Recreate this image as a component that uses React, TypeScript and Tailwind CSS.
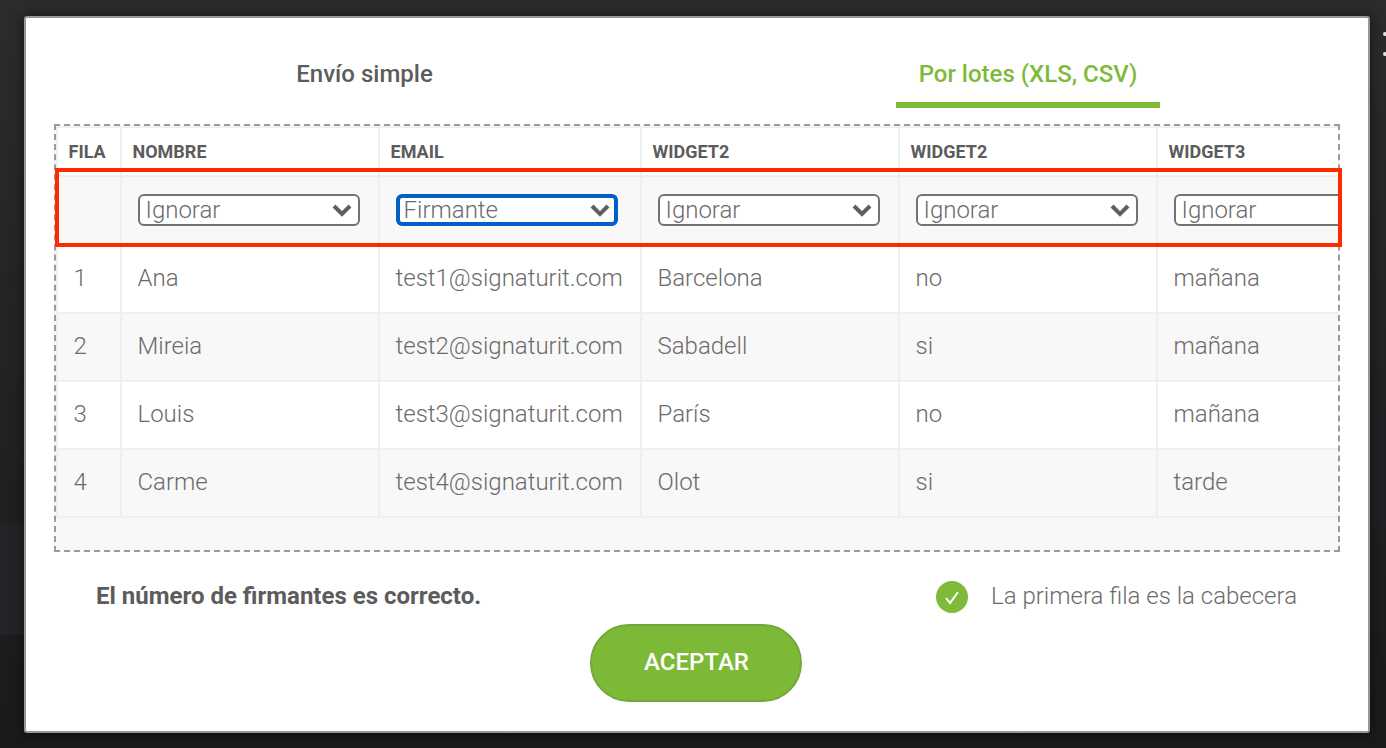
import React from "react";

const columns = ["FILA", "NOMBRE", "EMAIL", "WIDGET2", "WIDGET2", "WIDGET3"];
const selects = ["Ignorar", "Firmante", "Ignorar", "Ignorar", "Ignorar"];
const rows = [
  ["1", "Ana", "test1@signaturit.com", "Barcelona", "no", "mañana"],
  ["2", "Mireia", "test2@signaturit.com", "Sabadell", "si", "mañana"],
  ["3", "Louis", "test3@signaturit.com", "París", "no", "mañana"],
  ["4", "Carme", "test4@signaturit.com", "Olot", "si", "tarde"],
];
const gridCols = "grid grid-cols-[64px_258px_262px_258px_258px_260px] w-[1362px]";

function Chevron() {
  return (
    <svg width="22" height="14" viewBox="0 0 22 14" className="shrink-0">
      <path d="M3 3l8 8 8-8" fill="none" stroke="#5f5f5f" strokeWidth="4" />
    </svg>
  );
}

function FakeSelect({ label }: { label: string }) {
  const focused = label === "Firmante";
  return (
    <div
      className={`w-[222px] h-[32px] rounded-[6px] bg-white flex items-center justify-between ${
        focused ? "border-[4px] border-[#0060c8] pl-[4px] pr-[3px]" : "border-2 border-[#737373] pl-[6px] pr-[5px]"
      }`}
    >
      <span className="text-[24px] font-light text-[#6b6b6b] leading-none">{label}</span>
      <Chevron />
    </div>
  );
}

export default function App() {
  return (
    <div className="relative w-[1386px] h-[748px] overflow-hidden bg-gradient-to-b from-[#2c2c2c] to-[#1a1a1a] font-['Roboto',sans-serif] text-[#5c5c5c] flex items-start pt-[16px] pl-[24px]">
      {/* page behind the overlay, barely visible */}
      <div className="absolute left-0 top-[523px] w-[30px] h-[112px] bg-[#222427]" />
      <div className="absolute right-0 top-[415px] w-[30px] h-[110px] bg-[#1f2124]" />
      <span className="absolute left-0 top-[268px] text-[22px] leading-[26px] text-[#232323]">de</span>
      <span className="absolute left-[1383px] top-[32px] w-[4px] h-[4px] rounded-full bg-[#e5e5e5]" />
      <span className="absolute left-[1383px] top-[52px] w-[4px] h-[4px] rounded-full bg-[#e5e5e5]" />

      <div className="relative w-[1346px] h-[717px] rounded-[3px] bg-white border-2 border-[#979797] shadow-[0_0_14px_rgba(0,0,0,0.55)] flex flex-col items-center">
        <div className="flex w-full h-[90px]">
          <div className="w-[677px] flex justify-center pt-[41px] text-[24px] font-medium leading-[30px]">Envío simple</div>
          <div className="ml-[193px] w-[264px] h-[90px] border-b-[6px] border-[#7fba3b] flex justify-center pt-[41px] text-[24px] font-medium leading-[30px] text-[#7fba3b] whitespace-nowrap">Por lotes (XLS, CSV)</div>
        </div>
        <div className="mt-[16px] ml-[-1px] w-[1286px] h-[428px] border-2 border-dashed border-[#9a9a9a] bg-[#f7f8f8] overflow-hidden">
          <div className={`${gridCols} bg-white border-l-2 border-t-2 border-[#edf1ee]`}>
            {columns.map((c, i) => (
              <div key={i} className="h-[49px] bg-white border-r-2 border-b-2 border-[#edf1ee] flex items-center text-[18px] font-bold pl-[11px]">
                {c}
              </div>
            ))}
            <div className="h-[69px] bg-[#f8f8f8] border-r-2 border-[#edf1ee]" />
            {selects.map((s, i) => (
              <div key={i} className="h-[69px] bg-[#f8f8f8] border-r-2 border-[#edf1ee] flex items-center pl-[16px] pb-[4px]">
                {i === 4 ? (
                  <div className="w-[230px] h-[32px] rounded-[6px] bg-white flex items-center border-2 border-[#737373] pl-[6px]">
                    <span className="text-[24px] font-light text-[#6b6b6b] leading-none">{s}</span>
                  </div>
                ) : (
                  <FakeSelect label={s} />
                )}
              </div>
            ))}
            {rows.map((r, ri) =>
              r.map((v, i) => (
                <div
                  key={`${ri}-${i}`}
                  className={`h-[68px] border-r-2 border-b-2 border-[#edf1ee] flex items-center text-[24px] font-light text-[#6b6b6b] pl-[16px] pb-[2px] ${ri % 2 === 1 ? "bg-[#f8f8f8]" : "bg-white"}`}
                >
                  {v}
                </div>
              ))
            )}
          </div>
        </div>
        <div className="w-full flex items-start justify-between pl-[70px] pr-[71px] mt-[29px]">
          <span className="text-[24px] font-bold leading-[30px]">El número de firmantes es correcto.</span>
          <div className="flex items-start gap-[23px]">
            <svg width="32" height="32" viewBox="0 0 32 32">
              <circle cx="16" cy="16" r="16" fill="#7fba3b" />
              <path d="M10 17l4 5 8-11" fill="none" stroke="#fff" strokeWidth="2" />
            </svg>
            <span className="text-[24px] font-light text-[#6b6b6b] leading-[30px]">La primera fila es la cabecera</span>
          </div>
        </div>
        <button className="mt-[11px] ml-[-3px] w-[212px] h-[78px] rounded-[39px] bg-[#7cb937] border-2 border-[#72a838] text-white text-[24px] font-medium pl-[2px] pb-[2px]">ACEPTAR</button>
        <div className="absolute left-[29px] top-[150px] w-[1287px] h-[79px] border-[4px] border-[#ff2a00]" />
      </div>
    </div>
  );
}
